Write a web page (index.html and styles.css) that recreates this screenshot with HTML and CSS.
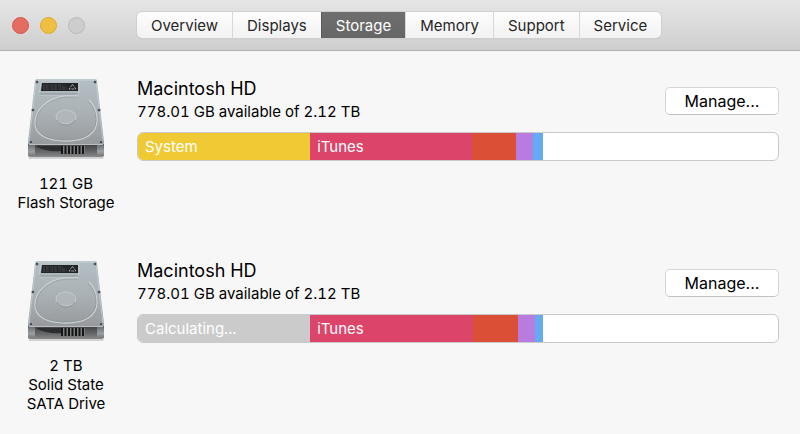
FILE: index.html
```html
<!DOCTYPE html>
<html lang="en">
<head>
    <meta charset="UTF-8">
    <meta name="viewport" content="width=device-width, initial-scale=1.0">
    <title>About This Mac</title>
    <link rel="stylesheet" href="styles.css">
</head>
<body>
    <!-- shared drive drawing -->
    <svg class="sprite" aria-hidden="true">
        <defs>
            <linearGradient id="plate" x1="0" y1="0" x2="0" y2="1">
                <stop offset="0" stop-color="#b3bec3"/>
                <stop offset="0.5" stop-color="#aab2b6"/>
                <stop offset="1" stop-color="#97999c"/>
            </linearGradient>
            <linearGradient id="front" x1="0" y1="0" x2="0" y2="1">
                <stop offset="0" stop-color="#3f4041"/>
                <stop offset="0.6" stop-color="#666869"/>
                <stop offset="1" stop-color="#868889"/>
            </linearGradient>
            <linearGradient id="leg" x1="0" y1="0" x2="0" y2="1">
                <stop offset="0" stop-color="#6c7073"/>
                <stop offset="0.6" stop-color="#9b9fa2"/>
                <stop offset="1" stop-color="#77797b"/>
            </linearGradient>
            <symbol id="drive" viewBox="0 0 80 82">
                <path d="M2 79h76l-1 2H3z" fill="#000" opacity="0.15"/>
                <path d="M2 66h76v11q0 2-2 2H4q-2 0-2-2z" fill="url(#front)"/>
                <path d="M11 68h24v5q-14 1-24-4z" fill="#2d2e2f"/>
                <path d="M2 67h7v9q0 2-3 2H2zM71 67h7v11h-4q-3 0-3-3z" fill="url(#leg)"/>
                <path d="M35 68h24v8H35z" fill="#7b7c7d"/>
                <path d="M36 68v8M39.5 68v8M43 68v8M46.5 68v8M50 68v8M53.5 68v8M57 68v8" stroke="#151515" stroke-width="2"/>
                <path d="M9 3q0-2 2-2h58q2 0 2 2l7 61q0 3-2 3H4q-2 0-2-3z" fill="url(#plate)"/>
                <path d="M10 2h60" stroke="#d5dcdf" stroke-width="0.8"/>
                <path d="M3 66.5h74" stroke="#c4c7c9" stroke-width="0.8"/>
                <path d="M10 3L3 64M70 3l7 61" fill="none" stroke="#c9d0d3" stroke-width="0.7"/>
                <path d="M52 18H39C21 20 9 32 9 45c0 12 12 18 31 18s31-7 31-21c0-8-3-15-8-20" fill="none" stroke="#cbd1d4" stroke-width="1.3"/>
                <path d="M52 19H39C22 21 10 33 10 45c0 11 12 17 30 17s30-7 30-20c0-8-3-14-8-19" fill="none" stroke="#8c9498" stroke-width="0.6"/>
                <ellipse cx="40" cy="39" rx="10" ry="7" fill="#b0b6b9" stroke="#c9ced0" stroke-width="0.8"/>
                <path d="M31 42q3 5 9 5t9-5" fill="none" stroke="#858c90" stroke-width="0.7"/>
                <path d="M15 4h38v10l-2 3H13z" fill="#adb8bd" stroke="#ccd4d7" stroke-width="0.7"/>
                <path d="M13 16h39" stroke="#838c91" stroke-width="0.8"/>
                <path d="M16 5h36v8H15z" fill="#222426"/>
                <path d="M17 7h20M17 9h24M17 11h24" stroke="#64686b" stroke-width="0.6" stroke-dasharray="2 0.7 3 1 1 0.5"/>
                <path d="M46.5 6.500L43 11h7z" fill="none" stroke="#bfc2c4" stroke-width="0.8" stroke-dasharray="3 1"/>
                <g fill="#2e3b45" stroke="#c2c9cd" stroke-width="0.5">
                    <circle cx="11" cy="4" r="1.5"/><circle cx="69" cy="4" r="1.5"/>
                    <circle cx="7" cy="32" r="1.5"/><circle cx="73" cy="32" r="1.5"/>
                    <circle cx="5" cy="64" r="1.5"/><circle cx="75" cy="64" r="1.5"/>
                </g>
            </symbol>
        </defs>
    </svg>

    <header class="toolbar">
        <div class="lights">
            <button class="light close" aria-label="Close"></button>
            <button class="light minimize" aria-label="Minimize"></button>
            <button class="light zoom" aria-label="Zoom" disabled></button>
        </div>
        <nav class="tabs">
            <button class="tab">Overview</button>
            <button class="tab">Displays</button>
            <button class="tab active">Storage</button>
            <button class="tab">Memory</button>
            <button class="tab">Support</button>
            <button class="tab">Service</button>
        </nav>
    </header>

    <main class="volumes">
        <section class="volume">
            <div class="drive">
                <svg class="drive-icon" aria-hidden="true"><use href="#drive"/></svg>
                <p>121 GB<br>Flash Storage</p>
            </div>
            <div class="details">
                <div class="heading">
                    <div>
                        <h2>Macintosh HD</h2>
                        <p class="available">778.01 GB available of 2.12 TB</p>
                    </div>
                    <button class="manage">Manage...</button>
                </div>
                <div class="bar">
                    <div class="segment system" style="width: 26.9%">System</div>
                    <div class="segment itunes" style="width: 25.3%">iTunes</div>
                    <div class="segment apps" style="width: 6.9%"></div>
                    <div class="segment photos" style="width: 2.7%"></div>
                    <div class="segment mail" style="width: 1.5%"></div>
                </div>
            </div>
        </section>

        <section class="volume">
            <div class="drive">
                <svg class="drive-icon" aria-hidden="true"><use href="#drive"/></svg>
                <p>2 TB<br>Solid State<br>SATA Drive</p>
            </div>
            <div class="details">
                <div class="heading">
                    <div>
                        <h2>Macintosh HD</h2>
                        <p class="available">778.01 GB available of 2.12 TB</p>
                    </div>
                    <button class="manage">Manage...</button>
                </div>
                <div class="bar">
                    <div class="segment calculating" style="width: 26.9%">Calculating...</div>
                    <div class="segment itunes" style="width: 25.5%">iTunes</div>
                    <div class="segment apps" style="width: 7%"></div>
                    <div class="segment photos" style="width: 2.6%"></div>
                    <div class="segment mail" style="width: 1.3%"></div>
                </div>
            </div>
        </section>
    </main>
</body>
</html>
```
FILE: styles.css
```css
* {
    margin: 0;
    padding: 0;
    box-sizing: border-box;
}

body {
    font-family: Inter, Roboto, sans-serif;
    font-size: 15px;
    font-variant-numeric: tabular-nums;
    color: #000;
    background: #f7f7f7;
}

button {
    font-family: inherit;
}

.sprite {
    position: absolute;
    width: 0;
    height: 0;
}

.toolbar {
    display: flex;
    align-items: center;
    height: 51px;
    padding: 0 12px;
    background: linear-gradient(#e6e6e6, #cecece);
    border-bottom: 1px solid #b0b0b0;
}

.lights {
    display: flex;
    gap: 11px;
    width: 125px;
}

.light {
    width: 17px;
    height: 17px;
    border-radius: 50%;
    border: 1px solid #d9574a;
    background: #e26d60;
}

.light.minimize {
    border-color: #dda92d;
    background: #efbf42;
}

.light.zoom {
    border-color: #b9b9b9;
    background: #cdcdcd;
}

.tabs {
    display: flex;
    height: 26px;
    border-radius: 5px;
    background: linear-gradient(#fdfdfd, #f2f2f2);
    box-shadow: 0 0 0 1px #cfcfcf, 0 1px 1px 0 #b4b4b4;
}

.tab {
    padding: 0 14px;
    font-size: 15px;
    color: #262626;
    border: none;
    border-left: 1px solid #d8d8d8;
    background: transparent;
}

.tab:first-child {
    border-left: none;
}

.tab.active {
    color: #fff;
    border-color: #5a5a5a;
    background: linear-gradient(#6f6f6f, #656565);
}

.volumes {
    display: flex;
    flex-direction: column;
    gap: 48px;
    padding: 27px 21px 20px 12px;
}

.volume {
    display: flex;
    gap: 17px;
}

.drive {
    flex: none;
    width: 108px;
    line-height: 19px;
    text-align: center;
}

.drive-icon {
    display: block;
    width: 80px;
    height: 82px;
    margin: 0 auto 14px;
}

.details {
    flex: 1;
}

.heading {
    display: flex;
    justify-content: space-between;
    align-items: center;
    margin-bottom: 8px;
}

.heading h2 {
    font-size: 18px;
    font-weight: 400;
    line-height: 22px;
}

.available {
    line-height: 24px;
}

.manage {
    width: 114px;
    height: 28px;
    font-size: 16px;
    color: #000;
    border: 1px solid #d6d6d6;
    border-bottom-color: #c2c2c2;
    border-radius: 5px;
    background: #fff;
}

.bar {
    display: flex;
    height: 29px;
    overflow: hidden;
    border: 1px solid #cacaca;
    border-radius: 6px;
    background: #fff;
}

.segment {
    flex: none;
    line-height: 27px;
    color: #fff;
}

.system,
.calculating,
.itunes {
    padding-left: 7px;
}

.system {
    background: #f0ca35;
}

.calculating {
    background: #cbcbcb;
}

.itunes {
    background: #dc4469;
}

.apps {
    background: #db4f37;
}

.photos {
    background: #b87bdf;
}

.mail {
    background: #65abf3;
}
```
